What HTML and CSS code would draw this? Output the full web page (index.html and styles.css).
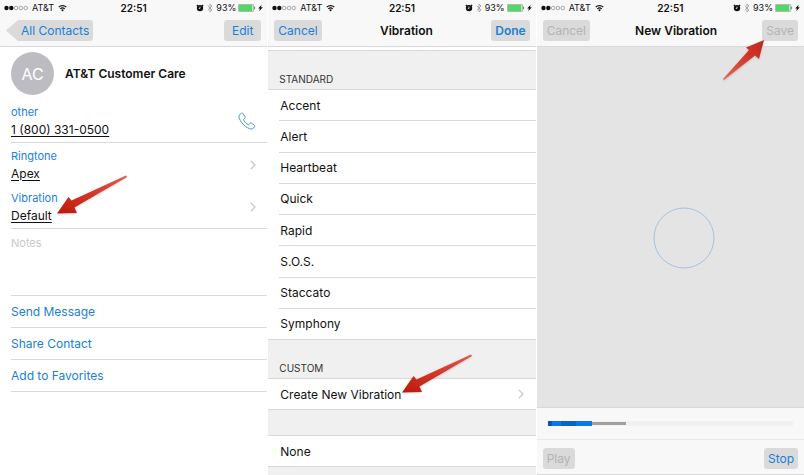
FILE: index.html
```
<!DOCTYPE html>
<html lang="en">
<head>
  <meta charset="UTF-8" />
  <meta name="viewport" content="width=device-width, initial-scale=1.0"/>
  <title>Custom Vibration</title>
  <link rel="stylesheet" href="styles.css">
</head>
<body>
  <svg class="sprite" aria-hidden="true">
    <symbol id="signal" viewBox="0 0 24 6">
      <circle cx="2.5" cy="3" r="2.2" fill="#111"/>
      <circle cx="7.3" cy="3" r="2.2" fill="#111"/>
      <g fill="none" stroke="#777" stroke-width=".6">
        <circle cx="12.1" cy="3" r="1.8"/>
        <circle cx="16.9" cy="3" r="1.8"/>
        <circle cx="21.7" cy="3" r="1.8"/>
      </g>
    </symbol>
    <symbol id="wifi" viewBox="0 0 10 8">
      <g fill="none" stroke="#111" stroke-width="1.3">
        <path d="M.8 3.1a6 6 0 0 1 8.4 0"/>
        <path d="M2.5 5a3.6 3.6 0 0 1 5 0"/>
      </g>
      <path d="M5 7.8 3.5 6.2a2.2 2.2 0 0 1 3 0z" fill="#111"/>
    </symbol>
    <symbol id="alarm" viewBox="0 0 8 8">
      <path d="M.8 2 2 .9M7.200 2 6 .9" stroke="#111" stroke-width="1.2"/>
      <circle cx="4" cy="4.100" r="3.200" fill="#111"/>
      <path d="M4 2.600v1.800H2.800" fill="none" stroke="#f8f8f8" stroke-width=".8"/>
    </symbol>
    <symbol id="bluetooth" viewBox="0 0 6 10">
      <path d="M.8 2.800 5 7 3 9V1l2 2L.8 7.200" fill="none" stroke="#999" stroke-width=".8"/>
    </symbol>
    <symbol id="battery" viewBox="0 0 18 8">
      <rect x=".4" y=".4" width="15.2" height="7.2" rx="1" fill="#fff" stroke="#777" stroke-width=".6"/>
      <rect x="1" y="1" width="13.4" height="6" fill="#4cd964"/>
      <path d="M16.3 2.600c1.200.3 1.200 2.500 0 2.800z" fill="#555"/>
    </symbol>
    <symbol id="bolt" viewBox="0 0 5 8">
      <path d="M3.600.8.2 4.600h1.700l-.6 2.700 3.500-4H3z" fill="#111"/>
    </symbol>
    <symbol id="chevron" viewBox="0 0 6 10">
      <path d="m.8.8 4.200 4.200L.8 9.200" fill="none" stroke="#c3c3c8" stroke-width="1.2"/>
    </symbol>
    <symbol id="arrow" viewBox="0 0 72 40">
      <path d="M1 38.500 12.500 22l3 3.500L70 .5l1 1.500L18.500 32.500l2.500 5.500z" fill="url(#red)"/>
    </symbol>
    <linearGradient id="red" x1="0" y1="1" x2="1" y2="0">
      <stop offset="0" stop-color="#b81a0c"/>
      <stop offset=".3" stop-color="#cc2b1d"/>
      <stop offset="1" stop-color="#e4574c"/>
    </linearGradient>
  </svg>

  <main class="screens">
    <!-- Contact card -->
    <section class="screen">
      <div class="status">
        <div class="status-left">
          <svg class="signal"><use href="#signal"/></svg>
          <span>AT&amp;T</span>
          <svg class="wifi"><use href="#wifi"/></svg>
        </div>
        <span class="time">22:51</span>
        <div class="status-right">
          <svg class="alarm"><use href="#alarm"/></svg>
          <svg class="bluetooth"><use href="#bluetooth"/></svg>
          <span>93%</span>
          <svg class="battery"><use href="#battery"/></svg>
          <svg class="bolt"><use href="#bolt"/></svg>
        </div>
      </div>
      <header class="nav">
        <button class="nav-btn back">All Contacts</button>
        <button class="nav-btn wide">Edit</button>
      </header>
      <div class="contact">
        <div class="person">
          <div class="avatar">AC</div>
          <h1>AT&amp;T Customer Care</h1>
        </div>
        <div class="field line">
          <div>
            <div class="field-label">other</div>
            <a class="field-value" href="tel:18003310500">1 (800) 331-0500</a>
          </div>
          <svg class="phone" viewBox="0 0 18 18">
            <path d="M3.300 1.300 1.600 2.700C.4 3.900.9 6.200 2.500 8.800c1.800 2.900 4.300 5.300 7 6.900 2.600 1.500 4.700 1.700 5.800.6l1.300-1.600c.4-.5.3-1-.2-1.400l-3-2.100c-.5-.3-1-.3-1.400.2l-.9 1.100c-.3.4-.7.400-1.100.2-1.800-1.100-3.300-2.700-4.400-4.500-.2-.4-.2-.8.2-1.100l1-.8c.5-.4.6-.9.300-1.400L4.900 1.500c-.4-.6-1-.7-1.600-.2z"/>
          </svg>
        </div>
        <div class="field">
          <div>
            <div class="field-label">Ringtone</div>
            <a class="field-value" href="#">Apex</a>
          </div>
          <svg class="chevron"><use href="#chevron"/></svg>
        </div>
        <div class="field line">
          <div>
            <div class="field-label">Vibration</div>
            <a class="field-value" href="#">Default</a>
          </div>
          <svg class="chevron"><use href="#chevron"/></svg>
          <svg class="arrow arrow-default"><use href="#arrow"/></svg>
        </div>
        <textarea class="notes line" placeholder="Notes" aria-label="Notes"></textarea>
        <button class="action line">Send Message</button>
        <button class="action line">Share Contact</button>
        <button class="action line">Add to Favorites</button>
      </div>
    </section>

    <!-- Vibration list -->
    <section class="screen">
      <div class="status">
        <div class="status-left">
          <svg class="signal"><use href="#signal"/></svg>
          <span>AT&amp;T</span>
          <svg class="wifi"><use href="#wifi"/></svg>
        </div>
        <span class="time">22:51</span>
        <div class="status-right">
          <svg class="alarm"><use href="#alarm"/></svg>
          <svg class="bluetooth"><use href="#bluetooth"/></svg>
          <span>93%</span>
          <svg class="battery"><use href="#battery"/></svg>
          <svg class="bolt"><use href="#bolt"/></svg>
        </div>
      </div>
      <header class="nav">
        <button class="nav-btn">Cancel</button>
        <h2>Vibration</h2>
        <button class="nav-btn bold">Done</button>
      </header>
      <h3 class="group-title first">STANDARD</h3>
      <div class="options">
        <button class="option">Accent</button>
        <button class="option">Alert</button>
        <button class="option">Heartbeat</button>
        <button class="option">Quick</button>
        <button class="option">Rapid</button>
        <button class="option">S.O.S.</button>
        <button class="option">Staccato</button>
        <button class="option">Symphony</button>
      </div>
      <h3 class="group-title">CUSTOM</h3>
      <div class="custom">
        <button class="option">Create New Vibration
          <svg class="chevron"><use href="#chevron"/></svg>
        </button>
        <svg class="arrow arrow-create"><use href="#arrow"/></svg>
      </div>
      <div class="spacer"></div>
      <button class="option">None</button>
      <div class="spacer end"></div>
    </section>

    <!-- Recording a new vibration -->
    <section class="screen">
      <div class="status">
        <div class="status-left">
          <svg class="signal"><use href="#signal"/></svg>
          <span>AT&amp;T</span>
          <svg class="wifi"><use href="#wifi"/></svg>
        </div>
        <span class="time">22:51</span>
        <div class="status-right">
          <svg class="alarm"><use href="#alarm"/></svg>
          <svg class="bluetooth"><use href="#bluetooth"/></svg>
          <span>93%</span>
          <svg class="battery"><use href="#battery"/></svg>
          <svg class="bolt"><use href="#bolt"/></svg>
        </div>
      </div>
      <header class="nav">
        <button class="nav-btn" disabled>Cancel</button>
        <h2>New Vibration</h2>
        <button class="nav-btn" disabled>Save</button>
        <svg class="arrow-save" viewBox="0 0 42 40">
          <path d="M41 0 23 7.500l3 2.500L0 39l1 1L32 15.500l4 3.500z" fill="url(#red-save)"/>
          <linearGradient id="red-save" x1="1" y1="0" x2="0" y2="1">
            <stop offset="0" stop-color="#c4261a"/>
            <stop offset=".4" stop-color="#d03528"/>
            <stop offset="1" stop-color="#e8685e"/>
          </linearGradient>
        </svg>
      </header>
      <div class="pad">
        <div class="touch"></div>
      </div>
      <div class="track-bar">
        <div class="track" role="progressbar" aria-label="Recording" aria-valuenow="32">
          <span class="tapped"></span>
          <span class="elapsed"></span>
        </div>
      </div>
      <footer class="toolbar">
        <button class="nav-btn" disabled>Play</button>
        <button class="nav-btn">Stop</button>
      </footer>
    </section>
  </main>
</body>
</html>
```
FILE: styles.css
```
:root {
  --bar: #f8f8f8;
  --line: #d9d9dc;
  --blue: #1a7fd6;
  --group: #f0f0f1;
  --btn: #dadadb;
}

* {
  box-sizing: border-box;
}

body {
  margin: 0;
  font-family: 'Inter', 'Liberation Sans', sans-serif;
  font-size: 12px;
  color: #111;
  background: #fff;
}

h1, h2, h3 {
  margin: 0;
}

button {
  font: inherit;
  border: none;
  cursor: pointer;
}

.sprite {
  position: absolute;
  width: 0;
  height: 0;
}

.screens {
  display: grid;
  grid-template-columns: repeat(3, 1fr);
  gap: 1px;
  min-height: 100vh;
}

.screen {
  display: flex;
  flex-direction: column;
  min-width: 0;
}

/* Status bar */
.status {
  display: grid;
  grid-template-columns: 1fr auto 1fr;
  align-items: center;
  height: 15px;
  padding: 0 4px;
  background: var(--bar);
  font-size: 9px;
}

.status-left, .status-right {
  display: flex;
  align-items: center;
  gap: 4px;
}

.status-right {
  justify-content: flex-end;
  gap: 2px;
}

.time {
  font-size: 10px;
  font-weight: 600;
}

.signal { width: 24px; height: 6px; }
.wifi { width: 9px; height: 8px; }
.alarm { width: 8px; height: 8px; }
.bluetooth { width: 8px; height: 10px; }
.battery { width: 18px; height: 8px; }
.bolt { width: 5px; height: 8px; }

/* Navigation bar */
.nav {
  position: relative;
  display: flex;
  justify-content: space-between;
  align-items: center;
  height: 32px;
  padding: 0 6px;
  background: var(--bar);
  border-bottom: 1px solid var(--line);
}

.nav h2 {
  font-size: 12px;
  font-weight: 600;
}

.nav-btn {
  height: 21px;
  padding: 0 4px;
  border-radius: 3px;
  background: var(--btn);
  color: var(--blue);
  font-size: 12px;
}

.nav-btn.wide {
  padding: 0 8px;
}

.nav-btn.back {
  padding: 0 4px 0 15px;
  clip-path: polygon(0 50%, 12px 0, 100% 0, 100% 100%, 12px 100%);
}

.nav-btn.bold {
  font-weight: 600;
}

.nav-btn:disabled {
  color: #b3b3b5;
  cursor: default;
}

/* Contact */
.contact {
  display: flex;
  flex-direction: column;
  padding-left: 11px;
}

.person {
  display: flex;
  align-items: center;
  gap: 11px;
  height: 53px;
}

.person h1 {
  font-size: 12px;
  font-weight: 600;
}

.avatar {
  display: flex;
  align-items: center;
  justify-content: center;
  width: 43px;
  height: 43px;
  border-radius: 50%;
  background: #bdbcc2;
  color: #fff;
  font-size: 16px;
}

.line {
  border-bottom: 1px solid var(--line);
}

.field {
  position: relative;
  display: flex;
  justify-content: space-between;
  align-items: center;
  height: 43px;
  padding-right: 11px;
  line-height: 17px;
}

.field-label {
  font-size: 11px;
  color: var(--blue);
}

.field-value {
  color: inherit;
  text-underline-offset: 2px;
}

.phone {
  width: 18px;
  height: 18px;
  fill: none;
  stroke: #4b96dc;
}

.chevron {
  flex: none;
  width: 6px;
  height: 10px;
}

.notes {
  height: 67px;
  padding: 7px 0;
  border-width: 0 0 1px;
  border-radius: 0;
  resize: none;
  outline: none;
  font: inherit;
  font-size: 11px;
}

.notes::placeholder {
  color: #c7c7cc;
}

.action {
  height: 32px;
  padding: 0;
  background: none;
  color: var(--blue);
  text-align: left;
}

/* Vibration list */
.group-title {
  display: flex;
  align-items: flex-end;
  height: 39px;
  padding: 0 11px 4px;
  background: var(--group);
  border-bottom: 1px solid var(--line);
  color: #333;
  font-size: 10px;
  font-weight: 400;
}

.group-title.first {
  height: 40px;
  margin-top: 3px;
  border-top: 1px solid var(--line);
}

.options {
  display: flex;
  flex: 1;
  flex-direction: column;
}

.options .option {
  flex: 1;
  margin-left: 11px;
  padding-left: 1px;
}

.options .option:last-child {
  margin-left: 0;
  padding-left: 12px;
}

.option {
  display: flex;
  justify-content: space-between;
  align-items: center;
  width: auto;
  min-height: 31px;
  padding: 0 12px;
  background: #fff;
  border-bottom: 1px solid var(--line);
  color: inherit;
  text-align: left;
}

.custom {
  position: relative;
}

.custom .option {
  width: 100%;
}

.spacer {
  height: 26px;
  background: var(--group);
  border-bottom: 1px solid var(--line);
}

.spacer.end {
  height: 8px;
  border-bottom: none;
}

/* New vibration */
.pad {
  position: relative;
  flex: 1;
  background: #e4e4e4;
}

.touch {
  position: absolute;
  top: 53%;
  left: 55%;
  width: 61px;
  height: 61px;
  border: 1px solid #a4c1e2;
  border-radius: 50%;
  transform: translate(-50%, -50%);
}

.track-bar {
  padding: 13px 11px;
  background: var(--bar);
  border-top: 1px solid var(--line);
  border-bottom: 1px solid #e8e8e9;
}

.track {
  display: flex;
  align-items: center;
  height: 5px;
  background: #f1f1f1;
}

.tapped {
  width: 18%;
  height: 5px;
  background: linear-gradient(90deg, #0a55b5 4px, #0c78e8 4px 13px, #0b62cc 13px 28px, #0c78e8 28px);
}

.elapsed {
  width: 14%;
  height: 3px;
  background: #a0a0a0;
}

.toolbar {
  display: flex;
  justify-content: space-between;
  align-items: center;
  height: 35px;
  padding: 2px 6px 0;
  background: var(--bar);
  border-bottom: 1px solid var(--line);
}

/* Pointers laid over the screens */
.arrow, .arrow-save {
  position: absolute;
  filter: drop-shadow(0 1px 1px rgba(0, 0, 0, 0.15));
  pointer-events: none;
}

.arrow {
  width: 72px;
  height: 40px;
}

.arrow-default {
  left: 45px;
  bottom: 13px;
}

.arrow-create {
  left: 133px;
  bottom: 16px;
}

.arrow-save {
  z-index: 1;
  top: 25px;
  right: 39px;
  width: 42px;
  height: 40px;
}
```
